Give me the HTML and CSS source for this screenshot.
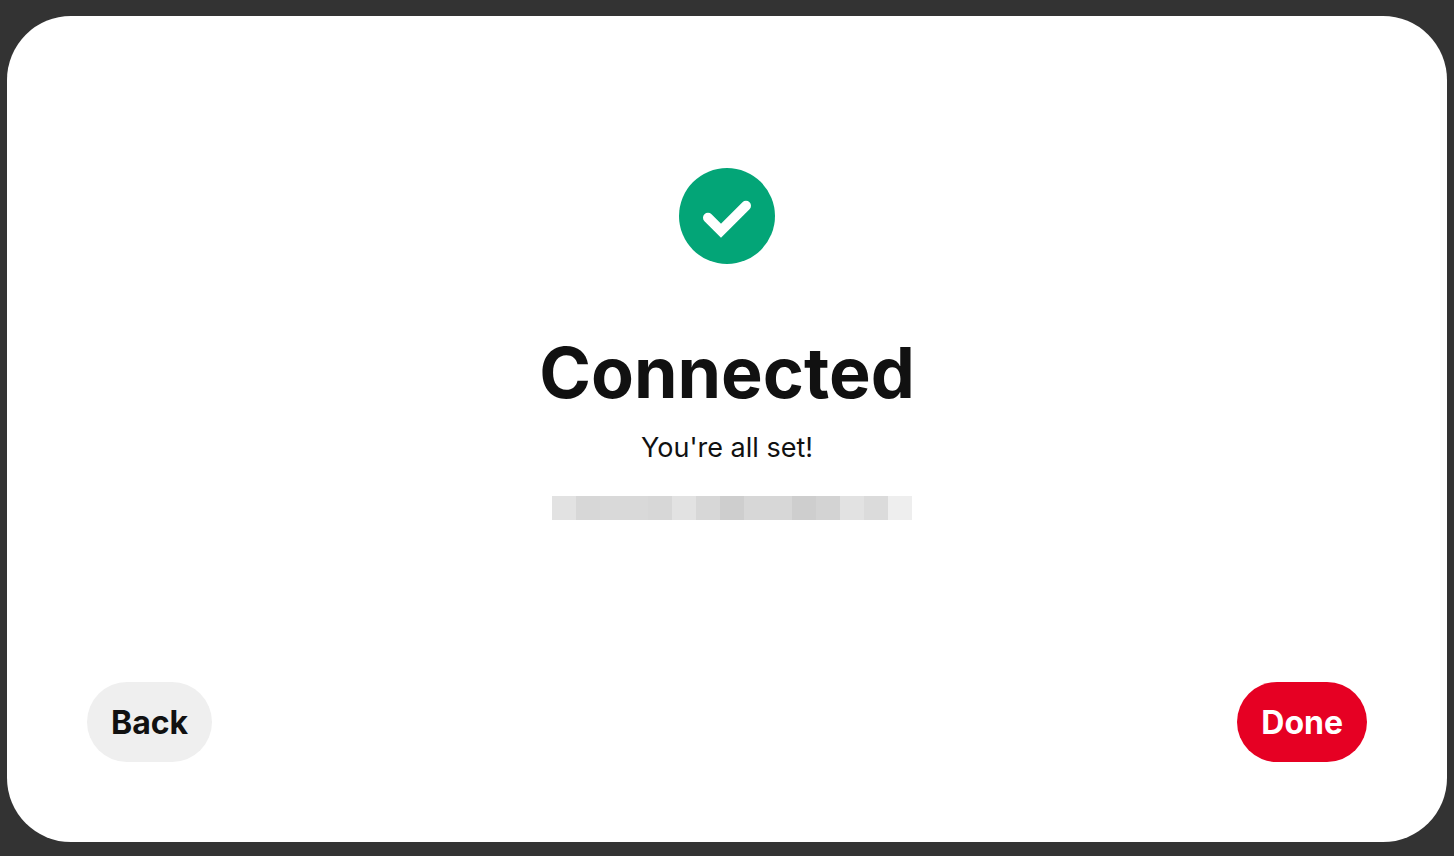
FILE: index.html
```html
<!DOCTYPE html>
<html lang="en">
  <head>
    <meta charset="UTF-8" />
    <meta name="viewport" content="width=device-width, initial-scale=1.0"/>
    <title>Connected</title>
    <link rel="stylesheet" href="styles.css">
  </head>
  <body>
    <main class="modal">
      <section class="content">
        <svg class="check-icon" viewBox="0 0 96 96" aria-hidden="true">
          <circle cx="48" cy="48" r="48" fill="#03a577"/>
          <path d="M29 49.7 42 62.7 67 37.7" fill="none" stroke="#fff" stroke-width="10" stroke-linecap="round" stroke-linejoin="miter"/>
        </svg>
        <h1>Connected</h1>
        <p>You're all set!</p>
        <!-- account name, masked -->
        <div class="masked">
          <span class="tone-2"></span>
          <span class="tone-5"></span>
          <span class="tone-4"></span>
          <span class="tone-4"></span>
          <span class="tone-5"></span>
          <span class="tone-2"></span>
          <span class="tone-5"></span>
          <span class="tone-7"></span>
          <span class="tone-5"></span>
          <span class="tone-5"></span>
          <span class="tone-7"></span>
          <span class="tone-6"></span>
          <span class="tone-2"></span>
          <span class="tone-3"></span>
          <span class="tone-1"></span>
        </div>
      </section>
      <footer>
        <button type="button" class="btn btn-back">Back</button>
        <button type="button" class="btn btn-done">Done</button>
      </footer>
    </main>
  </body>
</html>
```
FILE: styles.css
```css
* {
  box-sizing: border-box;
}

body {
  display: flex;
  min-height: 100vh;
  margin: 0;
  padding: 16px 7px 14px;
  background-color: #333;
  color: #111;
  font-family: Inter, sans-serif;
}

.modal {
  flex: 1;
  display: flex;
  flex-direction: column;
  justify-content: space-between;
  padding: 80px;
  border-radius: 64px;
  background-color: #fff;
}

.content {
  display: flex;
  flex-direction: column;
  align-items: center;
  padding-top: 72px;
  text-align: center;
}

.check-icon {
  width: 96px;
  height: 96px;
}

h1 {
  margin: 64px 0 0;
  font-size: 70px;
  font-weight: 700;
  line-height: 90px;
}

p {
  margin: 14px 0 0;
  font-size: 27px;
  line-height: 32px;
}

.masked {
  display: flex;
  margin-top: 32px;
  padding-left: 10px;
}

.masked span {
  width: 24px;
  height: 24px;
}

/* Mask shades, light to dark */
.tone-1 { background-color: #eee; }
.tone-2 { background-color: #e2e2e2; }
.tone-3 { background-color: #dbdbdb; }
.tone-4 { background-color: #d9d9d9; }
.tone-5 { background-color: #d7d7d7; }
.tone-6 { background-color: #d3d3d3; }
.tone-7 { background-color: #cecece; }

footer {
  display: flex;
  justify-content: space-between;
}

.btn {
  height: 80px;
  padding: 0 24px;
  border: none;
  border-radius: 40px;
  font-family: inherit;
  font-size: 32px;
  font-weight: 700;
  cursor: pointer;
}

.btn-back {
  background-color: #efefef;
  color: #111;
}

.btn-done {
  background-color: #e60023;
  color: #fff;
}
```
